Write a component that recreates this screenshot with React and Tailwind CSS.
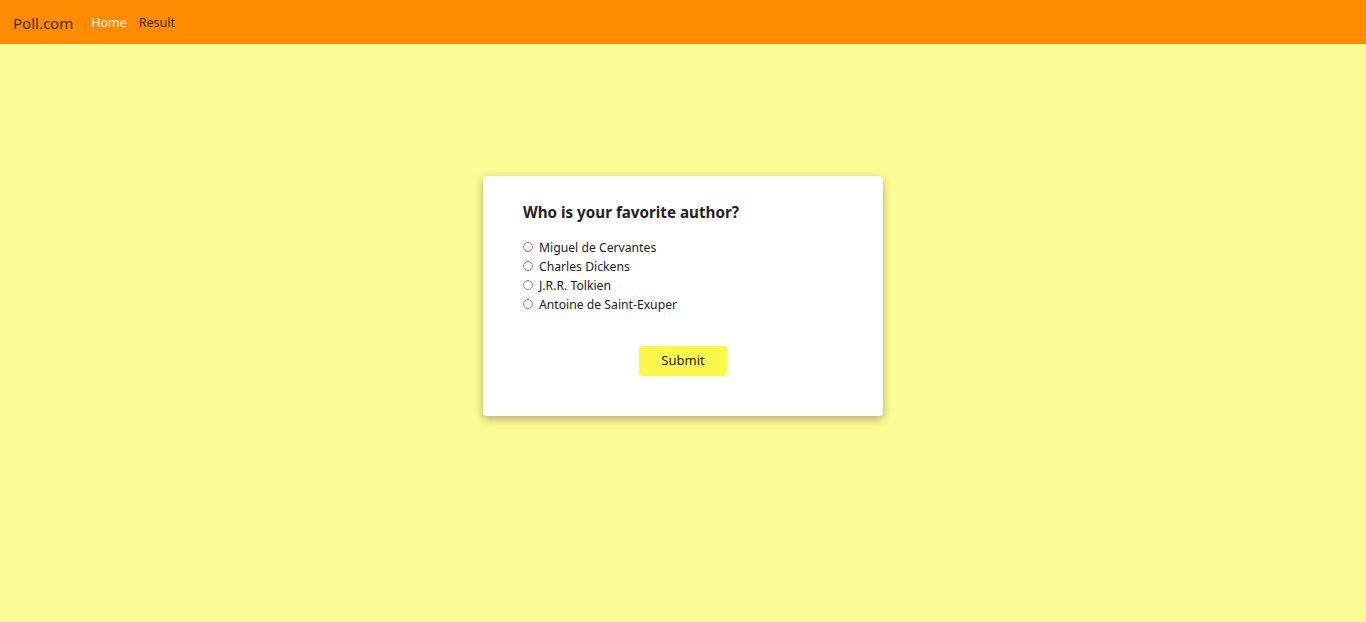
import React from 'react';

const authors = ['Miguel de Cervantes', 'Charles Dickens', 'J.R.R. Tolkien', 'Antoine de Saint-Exuper'];

const App = () => (
  <div className="min-h-screen bg-[#fdfb95] flex flex-col" style={{ fontFamily: '"Noto Sans", "Open Sans", sans-serif' }}>
    <nav className="h-[44px] bg-[#ff8c00] flex items-center px-[13px] pt-[3px]">
      <span className="text-[15px] text-[#3b2a12] mr-[18px]">Poll.com</span>
      <a href="#" className="text-[12.5px] text-[#fff6e6] mr-[12px]">Home</a>
      <a href="#" className="text-[12.5px] text-[#3b2a12]">Result</a>
    </nav>
    <main className="flex justify-center pt-[132px]">
      <div className="w-[400px] h-[240px] bg-white rounded-[4px] shadow-[0_3px_10px_rgba(0,0,0,0.3)] pt-[24px] px-[40px]">
        <h2 className="text-[15.2px] font-bold text-[#222] leading-[24px] mb-[15px]">Who is your favorite author?</h2>
        <div className="flex flex-col">
          {authors.map(a => (
            <label key={a} className="flex items-center h-[19px] text-[12.2px] text-[#222]">
              <input type="radio" name="author" className="appearance-none w-[10px] h-[10px] rounded-full border border-[#8a8a8a] bg-white m-0 mr-[6px] -mt-[3px] checked:border-[3px] checked:border-[#0075ff]" />
              <span>{a}</span>
            </label>
          ))}
        </div>
        <div className="flex justify-center mt-[31px]">
          <button className="w-[88px] h-[30px] bg-[#fcf84a] rounded-[3px] text-[13px] text-[#222]">Submit</button>
        </div>
      </div>
    </main>
  </div>
);

export default App;
